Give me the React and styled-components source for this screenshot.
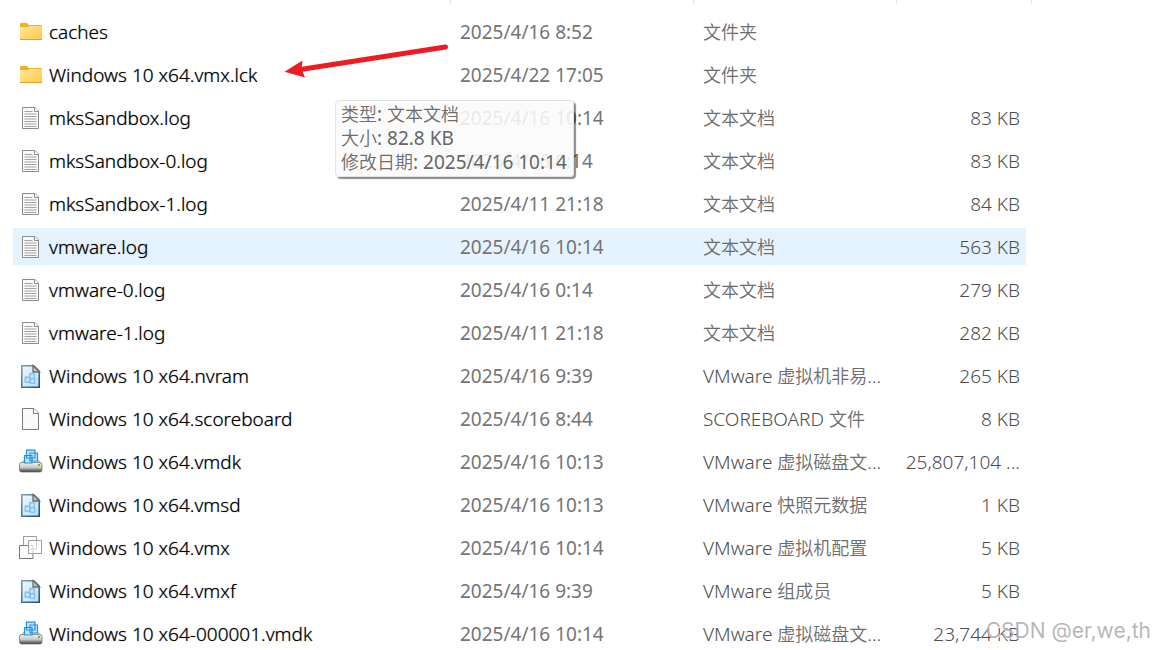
import React from 'react';
import styled, { createGlobalStyle } from 'styled-components';

const GlobalStyle = createGlobalStyle`
  * { box-sizing: border-box; }
  body { margin: 0; background: #fff; }
`;

const latin = '"Noto Sans", "Open Sans"';
const han = '"Noto Sans CJK SC"';

const Page = styled.main`
  position: relative;
  height: 100vh;
  overflow: hidden;
  padding-left: 13px;
  font-family: ${latin}, ${han}, sans-serif;
  font-size: 19px;
  font-weight: 300;
  line-height: 24px;
  color: #4c4c4c;
`;

const FileTable = styled.table`
  width: 100%;
  table-layout: fixed;
  border-collapse: separate;
  border-spacing: 0;
`;

const Column = styled.col`
  width: ${(p) => p.$width};
`;

const HeadCell = styled.th`
  height: 10px;
  padding: 0;
  padding-left: ${(p) => (p.$last ? '5px' : '0')};
  vertical-align: top;
`;

const Divider = styled.div`
  width: 1px;
  height: 4px;
  margin-left: ${(p) => (p.$start ? '0' : 'auto')};
  background: #e2e2e2;
`;

const Row = styled.tr`
  height: 43px;
  --fill: ${(p) => (p.$active ? '#e5f3ff' : 'transparent')};
`;

const Cell = styled.td`
  padding: 0 6px 0 ${(p) => (p.$right ? '0' : '9px')};
  border: 0 solid transparent;
  border-width: 3px 0;
  background: var(--fill);
  background-clip: padding-box;
  text-align: ${(p) => (p.$right ? 'right' : 'left')};
  white-space: nowrap;
`;

const NameCell = styled(Cell)`
  padding-left: 6px;
  color: #000;
  text-shadow: 0 0 1px rgba(0, 0, 0, 0.55);
`;

const DateCell = styled(Cell)`
  font-weight: 400;
  color: #757575;
`;

const Name = styled.div`
  display: flex;
  align-items: center;
  gap: 6px;
`;

const Glyph = styled.svg`
  flex: none;
  width: 24px;
  height: 24px;
  overflow: visible;
`;

const Han = styled.span`
  font-family: ${han}, sans-serif;
  font-size: 18px;
  font-weight: 350;
  line-height: 1;
  color: #6d6d6d;
`;

const Tooltip = styled.div`
  position: absolute;
  left: 335px;
  top: 100px;
  padding: 1px 6px 2px 5px;
  border: 1px solid #e4e4e4;
  border-radius: 4px;
  background: rgba(250, 250, 250, 0.88);
  box-shadow: 2px 2px 1px rgba(0, 0, 0, 0.45);
  font-weight: 400;
  color: #666;
  white-space: nowrap;
`;

const Arrow = styled.svg`
  position: absolute;
  left: 280px;
  top: 40px;
  width: 172px;
  height: 42px;
`;

const Watermark = styled.div`
  position: absolute;
  right: 3px;
  bottom: 7px;
  font-family: Inter, Roboto, "Liberation Sans", sans-serif;
  font-size: 21px;
  font-weight: 400;
  color: rgba(160, 160, 160, 0.75);
  text-shadow: 1px 1px 1px rgba(255, 255, 255, 0.8);
`;

function Label({ text }) {
  return text
    .split(/([\u4e00-\u9fff]+)/)
    .filter(Boolean)
    .map((part, i) => (/[\u4e00-\u9fff]/.test(part) ? <Han key={i}>{part}</Han> : part));
}

function FolderIcon() {
  return (
    <Glyph viewBox="0 0 24 24" aria-hidden="true">
      <defs>
        <linearGradient id="folder" x1="0" y1="0" x2="1" y2="1">
          <stop offset="0" stopColor="#ffe8a3" />
          <stop offset="1" stopColor="#fbc93f" />
        </linearGradient>
      </defs>
      <path d="M1 4.200Q1 3 2.200 3H8l1.600 2H22q1 0 1 1v4H1z" fill="#f4b01c" />
      <path d="M1 7h8l1.500-1H23v14H1z" fill="url(#folder)" />
      <path d="M1 19h22v1H1z" fill="#e2a032" />
    </Glyph>
  );
}

function LogIcon() {
  return (
    <Glyph viewBox="0 0 24 24" aria-hidden="true">
      <path d="M3.500 1.500h12.500l3.500 3.500v17.500h-16z" fill="#fafafa" stroke="#8c8c8c" />
      <path d="M15.500 1.500v4h4" fill="#fff" stroke="#8c8c8c" />
      <path
        d="M5.500 5.500h8M5.500 8h12M5.500 10.500h12M5.500 13h12M5.500 15.500h12M5.500 18h12M5.500 20.500h12"
        stroke="#a2a2a2"
      />
    </Glyph>
  );
}

function BlankIcon() {
  return (
    <Glyph viewBox="0 0 24 24" aria-hidden="true">
      <path d="M3.500 1.500h11.500l4.500 4.500v16.500h-16z" fill="#fafafa" stroke="#7b7b7b" />
      <path d="M14.500 1.500v5h5" fill="#fff" stroke="#7b7b7b" />
    </Glyph>
  );
}

function MachineIcon() {
  return (
    <Glyph viewBox="0 0 24 24" aria-hidden="true">
      <defs>
        <linearGradient id="sheet" x1="0" y1="0" x2="1" y2="1">
          <stop offset="0" stopColor="#edf8fc" />
          <stop offset="1" stopColor="#b8def4" />
        </linearGradient>
        <linearGradient id="sheetEdge" x1="0" y1="0" x2="1" y2="1">
          <stop offset="0" stopColor="#7ba0ae" />
          <stop offset="1" stopColor="#254e7b" />
        </linearGradient>
      </defs>
      <path d="M2.800 1.800h12l5.400 5.400v16H2.800z" fill="url(#sheet)" stroke="url(#sheetEdge)" strokeWidth="1.600" />
      <path d="M14 1.500v6.500h6.500z" fill="#c9c7bb" stroke="#66706f" strokeWidth="1.300" />
      <g fill="#c3e6fb" stroke="#86bfea" strokeWidth="1.400">
        <path d="M11 9.500l4.500.500-.500 5-4.500-.500zM6.500 13l4.500.500-.500 5L6 18zM11.500 14.500l4.500.500-.500 4.500-4.500-.500z" />
      </g>
    </Glyph>
  );
}

function DiskIcon() {
  return (
    <Glyph viewBox="0 0 24 24" aria-hidden="true">
      <defs>
        <linearGradient id="disk" x1="0" y1="0" x2="0" y2="1">
          <stop offset="0" stopColor="#f3f3f3" />
          <stop offset="0.550" stopColor="#c4c4c4" />
          <stop offset="1" stopColor="#333" />
        </linearGradient>
      </defs>
      <path d="M4.500 10.500h15l3 3.500H1.500z" fill="#e5e5e5" stroke="#999" strokeWidth="0.800" />
      <rect x="0.500" y="12.500" width="22.500" height="9.500" rx="2" fill="url(#disk)" stroke="#777" strokeWidth="0.800" />
      <path d="M19 14h2v2h-2z" fill="#54c626" />
      <path d="M7.500.200h8.500V8H7.500zM5.500 5.500H13v7.500H5.500zM11 3h7.500v8H11z" fill="#c0e6fd" />
      <path d="M7.500.200h8.500V8H7.500zM5.500 5.500H13v7.500H5.500zM11 3h7.500v8H11z" fill="none" stroke="#2590de" strokeWidth="1.200" />
    </Glyph>
  );
}

function ConfigIcon() {
  return (
    <Glyph viewBox="0 0 24 24" aria-hidden="true">
      <g fill="#fff" stroke="#9c9c9c">
        <path d="M4.500.5h13v13h-13z" />
        <path d="M.5 9.500h13.500v13H.5z" stroke="#777" />
        <path d="M9.500 4.500h13v13h-13z" />
      </g>
      <path d="M9.500 9.500H14v8M9.500 13h8v-8" fill="none" stroke="#ccd3e2" />
    </Glyph>
  );
}

const icons = {
  folder: FolderIcon,
  log: LogIcon,
  blank: BlankIcon,
  machine: MachineIcon,
  disk: DiskIcon,
  config: ConfigIcon,
};

const files = [
  ['folder', 'caches', '2025/4/16 8:52', '文件夹', ''],
  ['folder', 'Windows 10 x64.vmx.lck', '2025/4/22 17:05', '文件夹', ''],
  ['log', 'mksSandbox.log', '2025/4/16 10:14', '文本文档', '83 KB'],
  ['log', 'mksSandbox-0.log', '2025/4/16 0:14', '文本文档', '83 KB'],
  ['log', 'mksSandbox-1.log', '2025/4/11 21:18', '文本文档', '84 KB'],
  ['log', 'vmware.log', '2025/4/16 10:14', '文本文档', '563 KB'],
  ['log', 'vmware-0.log', '2025/4/16 0:14', '文本文档', '279 KB'],
  ['log', 'vmware-1.log', '2025/4/11 21:18', '文本文档', '282 KB'],
  ['machine', 'Windows 10 x64.nvram', '2025/4/16 9:39', 'VMware 虚拟机非易...', '265 KB'],
  ['blank', 'Windows 10 x64.scoreboard', '2025/4/16 8:44', 'SCOREBOARD 文件', '8 KB'],
  ['disk', 'Windows 10 x64.vmdk', '2025/4/16 10:13', 'VMware 虚拟磁盘文...', '25,807,104 ...'],
  ['machine', 'Windows 10 x64.vmsd', '2025/4/16 10:13', 'VMware 快照元数据', '1 KB'],
  ['config', 'Windows 10 x64.vmx', '2025/4/16 10:14', 'VMware 虚拟机配置', '5 KB'],
  ['machine', 'Windows 10 x64.vmxf', '2025/4/16 9:39', 'VMware 组成员', '5 KB'],
  ['disk', 'Windows 10 x64-000001.vmdk', '2025/4/16 10:14', 'VMware 虚拟磁盘文...', '23,744 KB'],
];

function FileRow({ file, active }) {
  const [kind, name, modified, type, size] = file;
  const Icon = icons[kind];
  return (
    <Row $active={active}>
      <NameCell>
        <Name>
          <Icon />
          <span>{name}</span>
        </Name>
      </NameCell>
      <DateCell>{modified}</DateCell>
      <Cell><Label text={type} /></Cell>
      <Cell $right>{size}</Cell>
    </Row>
  );
}

export default function App() {
  return (
    <Page>
      <GlobalStyle />
      <FileTable>
        <colgroup>
          <Column $width="438px" />
          <Column $width="243px" />
          <Column $width="203px" />
          <Column $width="129px" />
          <Column $width="auto" />
        </colgroup>
        <thead>
          <tr>
            <HeadCell aria-label="名称"><Divider /></HeadCell>
            <HeadCell aria-label="修改日期"><Divider /></HeadCell>
            <HeadCell aria-label="类型"><Divider /></HeadCell>
            <HeadCell aria-label="大小" />
            <HeadCell $last><Divider $start /></HeadCell>
          </tr>
        </thead>
        <tbody>
          {files.map((file) => (
            <FileRow key={file[1]} file={file} active={file[1] === 'vmware.log'} />
          ))}
        </tbody>
      </FileTable>
      <Arrow viewBox="0 0 172 42" aria-hidden="true">
        <path d="M165.500 7L22 29.300" stroke="#ed1c24" strokeWidth="5" strokeLinecap="round" />
        <path d="M4.500 31.800L22.500 20.500l-1 8.500 3.500 8.500z" fill="#ed1c24" />
      </Arrow>
      <Tooltip role="tooltip">
        <div><Label text="类型: 文本文档" /></div>
        <div><Label text="大小: 82.8 KB" /></div>
        <div><Label text="修改日期: 2025/4/16 10:14" /></div>
      </Tooltip>
      <Watermark>CSDN @er,we,th</Watermark>
    </Page>
  );
}
